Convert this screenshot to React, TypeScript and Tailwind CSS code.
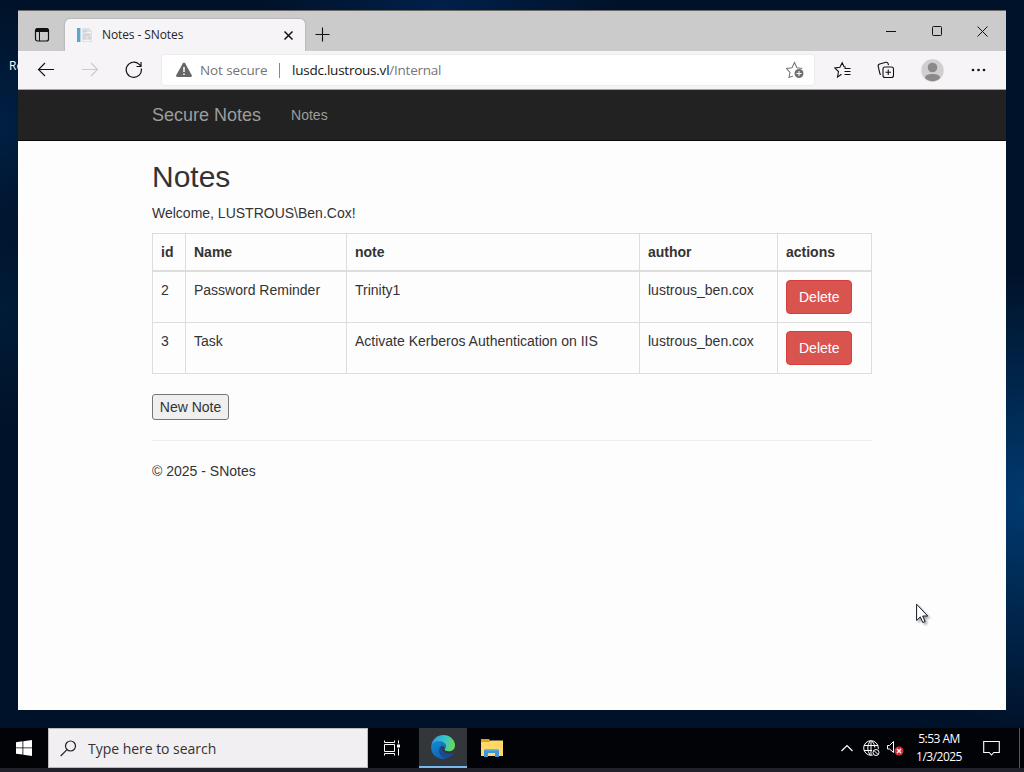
import React from 'react';

interface Note {
  id: number;
  name: string;
  note: string;
  author: string;
}

const notes: Note[] = [
  { id: 2, name: 'Password Reminder', note: 'Trinity1', author: 'lustrous_ben.cox' },
  { id: 3, name: 'Task', note: 'Activate Kerberos Authentication on IIS', author: 'lustrous_ben.cox' },
];

const TitleBar: React.FC = () => (
  <div className="flex h-[41px] border-t border-[#6b6865] bg-[#cbcbcb]">
    {/* Tab actions */}
    <div className="flex w-[47px] items-center justify-center pt-2">
      <svg width="16" height="16" viewBox="0 0 16 16" fill="none" stroke="#111">
        <rect x="1.5" y="1.5" width="13" height="12.5" rx="2" strokeWidth="1.2" />
        <path d="M2 2h12v2.5H2z" fill="#111" />
        <path d="M5.5 5v9" />
      </svg>
    </div>

    {/* Active tab */}
    <div className="mt-[8px] flex w-[240px] items-center rounded-t-[5px] bg-[#f6f4f6] pl-[12px] shadow-[0_0_2px_rgba(0,0,0,0.3)]">
      <svg width="16" height="16" viewBox="0 0 16 16">
        <path d="M0 1h3v14H0z" fill="#5fa3cf" />
        <path d="M3 1h1v14H3z" fill="#b5d4e8" />
        <path d="M5 1h7l3 3v11H5z" fill="#dfe1e3" />
        <path d="M6 4h4M6 8h7M6 11h3M11 11h3" stroke="#c2c5c8" />
        <path d="M6 13.5h8M10 5.5h4" stroke="#f5f5f5" />
      </svg>
      <span className="ml-[9px] w-[181px] text-[12px] tracking-[-0.1px] text-[#242424]">Notes - SNotes</span>
      <svg width="11" height="11" viewBox="0 0 11 11" stroke="#111" strokeWidth="1.5">
        <path d="M1.5 1.5l8 8M9.5 1.5l-8 8" />
      </svg>
    </div>

    <div className="flex w-[34px] items-center justify-center pt-[7px]">
      <svg width="15" height="15" viewBox="0 0 15 15" stroke="#111" strokeWidth="1.1">
        <path d="M7.5 .5v14M.5 7.5h14" />
      </svg>
    </div>

    {/* Window controls */}
    <div className="ml-auto flex h-[40px]">
      <div className="flex w-[46px] items-center justify-center">
        <svg width="10" height="10" viewBox="0 0 10 10" stroke="#111"><path d="M0 5.5h10" /></svg>
      </div>
      <div className="flex w-[46px] items-center justify-center">
        <svg width="10" height="10" viewBox="0 0 10 10" fill="none" stroke="#111"><rect x=".5" y=".5" width="9" height="9" rx="1" /></svg>
      </div>
      <div className="flex w-[46px] items-center justify-center pr-px">
        <svg width="11" height="11" viewBox="0 0 11 11" stroke="#111"><path d="M.5 .5l10 10M10.5 .5l-10 10" /></svg>
      </div>
    </div>
  </div>
);

const Toolbar: React.FC = () => (
  <div className="flex h-[39px] items-center border-b border-[#a5a3a5] bg-[#f6f4f6]">
    <div className="flex w-[144px] items-center pl-[19px]">
      <svg width="18" height="16" viewBox="0 0 18 16" fill="none" stroke="#111" strokeWidth="1.1">
        <path d="M17 7.5H1.5M8 1L1.5 7.500l6.500 6.500" />
      </svg>
      <svg className="ml-[27px]" width="18" height="16" viewBox="0 0 18 16" fill="none" stroke="#cbc9cb" strokeWidth="1.1">
        <path d="M0 7.5h15.5M9 1l6.500 6.500L9 14" />
      </svg>
      <svg className="ml-[25px]" width="18" height="18" viewBox="0 0 18 18" fill="none" stroke="#111" strokeWidth="1.2">
        <path d="M16.300 7.500A7.600 7.600 0 1 1 14.200 3.400L16 5.200M16 1v4.500h-4.500" />
      </svg>
    </div>

    {/* Address bar */}
    <div className="flex h-[30px] w-[652px] items-center rounded-[3px] bg-white pl-[13px] shadow-[0_0_2px_rgba(0,0,0,0.12)]">
      <svg width="18" height="16" viewBox="0 0 18 16">
        <path d="M7.900 1.200q1.100-1.400 2.200 0l6.700 12q.4 1.800-1.300 1.800h-13q-1.700 0-1.300-1.800z" fill="#666" />
        <path d="M9 5v5M9 11.500v1.600" stroke="#fff" strokeWidth="1.5" />
      </svg>
      <span className="ml-[7px] w-[68px] whitespace-nowrap text-[13.5px] tracking-[-0.1px] text-[#767476]">Not secure</span>
      <span className="ml-[11px] h-[15px] w-px bg-[#888]" />
      <span className="ml-[12px] whitespace-nowrap text-[13.5px] tracking-[-0.24px] text-[#161616]">
        lusdc.lustrous.vl<span className="text-[#767676]">/Internal</span>
      </span>
      <svg className="ml-auto mr-[10px]" width="18" height="18" viewBox="0 0 18 18" fill="none" stroke="#777">
        <path d="M7 15l-4 1.500 1-5-3.500-4L6 6.800 8.500 1.500 11 6.800l5.300.7" strokeWidth="1.1" />
        <circle cx="13" cy="12.500" r="4.500" fill="#707070" stroke="none" />
        <path d="M13 10v5M10.500 12.500h5" stroke="#fff" />
      </svg>
    </div>

    <div className="flex flex-1 items-center">
      <svg className="ml-[20px]" width="18" height="18" viewBox="0 0 18 18" fill="none" stroke="#111" strokeWidth="1.1">
        <path d="M7.500 13.300L3.500 16l1-5.500L.7 7l5.200-.7L8.200 1.700l2 4.300h1.800M10.500 7.500h6M10.500 10.500h6M10.500 13.500h6" />
      </svg>
      <svg className="ml-[25px]" width="18" height="18" viewBox="0 0 18 18" fill="none" stroke="#111" strokeWidth="1.1">
        <path d="M4 13.500L3 13 1.200 5.500Q.8 3.500 2.700 3L9 1.300q1.600-.3 2.100 1.400l.4 1.500" />
        <rect x="6" y="6" width="10.500" height="10.500" rx="2" />
        <path d="M11.250 8.500v5.500M8.500 11.250H14" />
      </svg>
      <svg className="ml-[26px]" width="23" height="23" viewBox="0 0 23 23">
        <circle cx="11.500" cy="11.500" r="11.200" fill="#d0cecf" />
        <circle cx="11.500" cy="8.500" r="4.800" fill="#8b898a" />
        <path d="M4 19q0-4 7.500-4t7.500 4a10.500 10.500 0 0 1-15 0z" fill="#8b898a" />
      </svg>
      <svg className="ml-[27px]" width="15" height="4" viewBox="0 0 15 4" fill="#111">
        <circle cx="2" cy="2" r="1.300" />
        <circle cx="7.500" cy="2" r="1.300" />
        <circle cx="13" cy="2" r="1.300" />
      </svg>
    </div>
  </div>
);

const NotesPage: React.FC = () => (
  <div className="flex-1 bg-[#fefdfe] font-['Liberation_Sans',Arial,sans-serif] text-[14px] leading-[20px] text-[#333]">
    <nav className="flex h-[51px] items-center border-b border-[#080808] bg-[#222] pl-[134px] text-[#9d9d9d]">
      <span className="text-[18px]">Secure Notes</span>
      <span className="ml-[30px]">Notes</span>
    </nav>

    <main className="ml-[134px] w-[720px]">
      <h2 className="pt-[19px] text-[30px] leading-[33px]">Notes</h2>
      <p className="mt-[10px]">Welcome, LUSTROUS\Ben.Cox!</p>

      <table className="mt-[10px] w-[720px] table-fixed border-collapse border border-[#ddd] text-left">
        <colgroup>
          <col className="w-[33px]" />
          <col className="w-[161px]" />
          <col className="w-[293px]" />
          <col className="w-[138px]" />
          <col className="w-[94px]" />
        </colgroup>
        <thead>
          <tr>
            {['id', 'Name', 'note', 'author', 'actions'].map((heading) => (
              <th key={heading} className="border border-b-2 border-[#ddd] p-2 font-bold">{heading}</th>
            ))}
          </tr>
        </thead>
        <tbody>
          {notes.map((note) => (
            <tr key={note.id} className="align-top">
              <td className="border border-[#ddd] p-2">{note.id}</td>
              <td className="border border-[#ddd] p-2">{note.name}</td>
              <td className="border border-[#ddd] p-2">{note.note}</td>
              <td className="border border-[#ddd] p-2">{note.author}</td>
              <td className="border border-[#ddd] p-2">
                <button className="block rounded-[4px] border border-[#d43f3a] bg-[#d9534f] px-3 py-1.5 text-white">
                  Delete
                </button>
              </td>
            </tr>
          ))}
        </tbody>
      </table>

      <button className="mt-[20px] block h-[26px] w-[77px] whitespace-nowrap rounded-[3px] border border-[#767676] bg-[#efefef]">
        New Note
      </button>
      <hr className="mt-[20px] border-[#eee]" />
      <footer className="mt-[20px]">© 2025 - SNotes</footer>
    </main>
  </div>
);

const Taskbar: React.FC = () => (
  <div className="flex h-[40px] bg-[#010307] text-white">
    <div className="flex w-[48px] items-center justify-center">
      <svg width="16" height="16" viewBox="0 0 16 16" fill="#fff">
        <path d="M0 2.200l6.500-.9v6.200H0zM7.300 1.200L16 0v7.500H7.300zM0 8.300h6.500v6.200L0 13.700zM7.300 8.300H16V16l-8.700-1.200z" />
      </svg>
    </div>
    <div className="flex w-[320px] items-center border border-[#bbb] bg-[#f1eff1] pl-[11px]">
      <svg width="17" height="17" viewBox="0 0 17 17" fill="none" stroke="#222" strokeWidth="1.2">
        <circle cx="10.500" cy="6" r="5" />
        <path d="M7 9.700L.7 16" />
      </svg>
      <span className="ml-[11px] text-[14px] tracking-[-0.03px] text-[#333]">Type here to search</span>
    </div>

    <div className="flex w-[51px] items-center pl-[15px]">
      <svg width="17" height="16" viewBox="0 0 17 16" fill="none" stroke="#fff">
        <path d="M1.500 .5v2h10v-2M1.500 15.500v-2h10v2M1.500 4.500h10v7h-10zM15.500 .5v3M15.500 8.500v7" />
        <path d="M14 4.500h3v3h-3z" fill="#fff" stroke="none" />
      </svg>
    </div>
    <div className="flex w-[48px] items-center justify-center border-b-2 border-[#76b9ed] bg-[#33363b]">
      <svg width="24" height="24" viewBox="0 0 24 24">
        <defs>
          <linearGradient id="edgeTop" x1="0" y1="0.3" x2="1" y2="0.5">
            <stop offset="0" stopColor="#2599d8" />
            <stop offset=".5" stopColor="#35c1cf" />
            <stop offset="1" stopColor="#66dc55" />
          </linearGradient>
          <linearGradient id="edgeSide" x1="0" y1="0" x2="0.5" y2="1">
            <stop offset="0" stopColor="#168bd3" />
            <stop offset="1" stopColor="#1062b5" />
          </linearGradient>
        </defs>
        <path d="M.3 10.500C1.500 3.800 6.500 0 12.300 0 19.200 0 24 5 24 10.300c0 4-3 6-6.300 6-2.500 0-4.500-.9-4-2 1.500-1.800 1.400-7-5-7C4.700 7.300 1.500 9 .3 10.500z" fill="url(#edgeTop)" />
        <path d="M.2 11.500C.8 8 4 6.300 8 6.300c4.200 0 7.100 2 7.100 5.200l-1.300 2.300C13.500 10 8.800 10.200 8.300 15c-.3 4 2.400 7.300 6 8.700C6 25.200-.6 18.700.2 11.500z" fill="url(#edgeSide)" />
        <path d="M11.500 10C8 11.500 7.500 17 10.200 20.300c2.300 3 4.600 3.500 4.600 3.500 3.400-.7 6.200-3 7.700-5.600.2-.4-.1-.7-.6-.4-4.900 2.200-11 .2-10.700-4.800z" fill="#184b96" />
      </svg>
    </div>
    <div className="flex w-[48px] items-center justify-center pl-[2px]">
      <svg width="22" height="18" viewBox="0 0 22 18">
        <path d="M0 0h8l1.500 2H22v15H0z" fill="#e6a11c" />
        <path d="M0 3h8l2-1.500h12V17H0z" fill="#ffd968" />
        <path d="M3 18v-6q0-2 2-2h11q2 0 2 2v6h-4v-4H7v4z" fill="#3f97d8" />
        <path d="M4 10h13v1.500H4z" fill="#67b3e3" />
      </svg>
    </div>

    {/* System tray */}
    <div className="ml-auto flex items-center">
      <svg width="12" height="8" viewBox="0 0 12 8" fill="none" stroke="#fff" strokeWidth="1.2"><path d="M.5 7L6 1.500 11.500 7" /></svg>
      <svg className="ml-[10px]" width="17" height="17" viewBox="0 0 17 17" fill="none" stroke="#fff">
        <circle cx="8" cy="8" r="7.300" />
        <path d="M8 .7v14.600M1 5.500h14M1 10.500h8M7 1Q2.500 8 7 15M9 1q3 3.500 2.800 6.500" />
        <circle cx="13" cy="12.500" r="4.200" fill="#010307" stroke="none" />
        <circle cx="13" cy="12.500" r="3" />
        <path d="M11 10.500l4 4" />
      </svg>
      <svg className="ml-[7px]" width="17" height="16" viewBox="0 0 17 16">
        <path d="M.5 5.500h2l4-4v11l-4-3.500h-2z" fill="none" stroke="#fff" />
        <circle cx="12" cy="11" r="4.500" fill="#d52b32" />
        <path d="M10 9l4 4M14 9l-4 4" stroke="#fff" strokeWidth="1.3" />
      </svg>
      <div className="ml-[3px] w-[64px] whitespace-nowrap text-center text-[12px] leading-[18px] tracking-[-0.5px]">
        <div>5:53 AM</div>
        <div>1/3/2025</div>
      </div>
      <svg className="ml-[12px]" width="17" height="17" viewBox="0 0 17 17" fill="none" stroke="#fff" strokeWidth="1.1">
        <path d="M.7 1.500h15.600v11h-5.500L8.500 15l-2.300-2.500H.7z" />
      </svg>
      <div className="ml-[19px] mr-[4px] h-[40px] w-px bg-[#55585c]" />
    </div>
  </div>
);

const App: React.FC = () => {
  return (
    <div className="flex h-[772px] w-[1024px] flex-col overflow-hidden bg-[#20212b] font-['Open_Sans','Noto_Sans',sans-serif]">
      <div className="relative h-[728px] bg-[#001229] bg-[radial-gradient(ellipse_160px_230px_at_1024px_500px,#003a70,transparent),radial-gradient(ellipse_100px_120px_at_0px_125px,#002045,transparent),radial-gradient(ellipse_100px_120px_at_0px_310px,#001c38,transparent),radial-gradient(ellipse_180px_120px_at_440px_0px,#00204a,transparent)] pl-[18px] pt-[10px]">
        {/* Desktop icon label, mostly hidden behind the window */}
        <span className="absolute left-[9px] top-[57px] text-[12px] leading-[18px] text-white">Re</span>
        <div className="relative flex h-[700px] w-[988px] flex-col">
          <TitleBar />
          <Toolbar />
          <NotesPage />
        </div>
        {/* Mouse pointer */}
        <svg className="absolute left-[916px] top-[603px] drop-shadow-[2px_2px_1px_rgba(0,0,0,0.35)]" width="13" height="21" viewBox="0 0 13 21">
          <path d="M.6 1.200v16.300l3.700-3.600 2.500 5.600 2.300-1-2.400-5.500h5z" fill="#fff" stroke="#111827" />
        </svg>
      </div>
      <Taskbar />
    </div>
  );
};

export default App;
